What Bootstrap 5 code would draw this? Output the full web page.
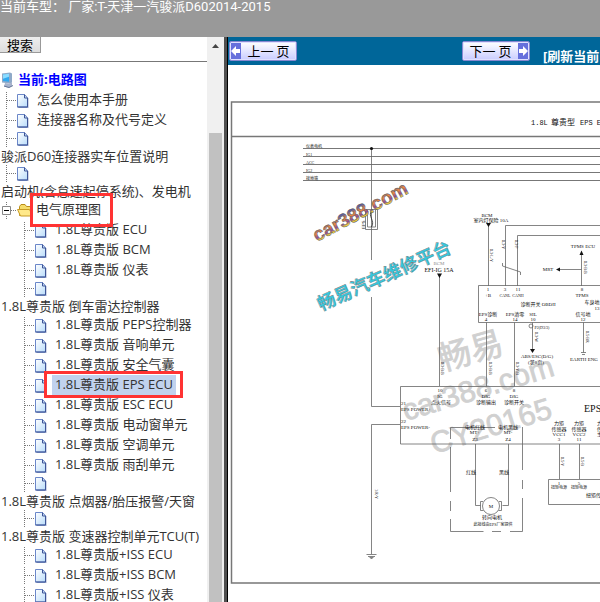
<!DOCTYPE html>
<html lang="zh-CN">
<head>
<meta charset="utf-8">
<meta name="viewport" content="width=device-width, initial-scale=1">
<title>电路图</title>
<link rel="stylesheet" href="https://cdn.jsdelivr.net/npm/bootstrap@5.3.0/dist/css/bootstrap.min.css">
<style>
body{font:13px/20px "Open Sans","Noto Sans CJK SC",sans-serif;color:#333;background:#fff}
a{color:#333;text-decoration:none}
.top-strip{background:#999;color:#fff;height:37px;line-height:14px;font-family:Roboto,"Noto Sans CJK SC",sans-serif}
.side-pane{width:207px}
.search-bar{height:25px;border-bottom:1px solid #777}
.search-btn{width:41px;height:16px;border:1px solid #999;border-top:0;border-left:0;background:linear-gradient(#eee,#ddd);font-size:13px;line-height:12px;color:#000}
.tree-area{padding-top:8px}
.root-link{color:#00f;font-weight:700;font-size:13px;margin-left:3px}
.twig{display:block;flex:none}
.tree-row{height:20px;line-height:19px;white-space:nowrap}
.tree-row a{padding:0 3px;margin-left:5px}
.tree-row .root-link{padding:0;margin-left:3px}
.blank-row{display:block}
.blank-row .caption-line{display:block;height:17px;line-height:17px;padding-left:1px;white-space:nowrap}
.sub-tree .twig{margin-left:18px}
.picked{background:#c1d2ee}
.frame-box{position:absolute;border:3px solid #f33;pointer-events:none}
.frame-folder{left:30px;top:-7px;width:83px;height:34px}
.frame-item{left:44px;top:-4px;width:139px;height:27px}
.scroll-col{width:17px;background:#f0f0f0}
.scroll-arrow{height:96px;padding:6px 0 0 5px}
.scroll-thumb{background:#c1c1c1;margin:0 2px}
.split{width:4px;background:#505050;border-right:1px solid #000}
.tool-strip{background:#069;height:28px;white-space:nowrap;padding-left:1px}
.page-btn{height:20px;width:68px;border:1px solid #8888d0;border-radius:2px;outline:1px solid #dfe0ff;outline-offset:-2px;background:linear-gradient(#fff,#c9ccff);color:#000;font:13px/16px "Noto Sans CJK SC",sans-serif}
.btn-next{margin-left:165px}
.refresh-link{color:#fff;font-weight:700;margin-left:13px;padding-top:9px}
.refresh-link:hover{color:#fff}
.sheet text{font:5px "Liberation Serif","Noto Sans CJK SC",serif;fill:#111}
.sheet .c{text-anchor:middle}
.sheet .fine text{font-size:4px}
.sheet text.wide{font-size:6px}
.sheet .caption text{font:8px "Liberation Mono","Noto Sans CJK SC",monospace;fill:#111}
.sheet .caption .lat{font-size:7px}
.sheet .heading{font-size:10px}
.sheet .grey text{font:30px "Liberation Sans","Noto Sans CJK SC",sans-serif;fill:#d0d0d0;stroke:#d0d0d0;stroke-width:.8}
.sheet .grey .han{font-size:33px}
.sheet .brand{font:700 19px "Liberation Sans",sans-serif;fill:url(#rainbow);stroke:#555;stroke-width:.5}
.sheet .slogan{font:700 18px "Noto Sans CJK SC",sans-serif;fill:#35c8de;stroke:#777;stroke-width:.4}
</style>
<script src="https://cdn.jsdelivr.net/npm/bootstrap@5.3.0/dist/js/bootstrap.bundle.min.js"></script>
</head>
<body class="vh-100 d-flex flex-column overflow-hidden">
<svg width="0" height="0" class="position-absolute" aria-hidden="true">
  <defs>
    <linearGradient id="paper" x1="0" y1="0" x2="1" y2="1"><stop offset="0" stop-color="#fff"/><stop offset="1" stop-color="#b9dcfa"/></linearGradient>
    <linearGradient id="rainbow" x1="0" y1="0" x2="0" y2="1"><stop offset=".2" stop-color="#4a5aa8"/><stop offset=".45" stop-color="#f28a3c"/><stop offset=".65" stop-color="#8a4a9a"/><stop offset=".78" stop-color="#f4dc30"/></linearGradient>
    <g id="leaf">
      <path d="M6.5 2v18M7 10.500h10" stroke="#777" stroke-dasharray="1 1" fill="none"/>
      <path d="M18 4.500h6.500l3 3.500v9.500H18z" fill="#4a5c9c" transform="translate(1 .5)" opacity=".5"/>
      <path d="M17.500 4.500h7l3 3.500v9h-10z" fill="url(#paper)" stroke="#6b87c9"/>
      <path d="M24.500 4.500v3.500h3M27.500 8v9h-10" fill="none" stroke="#3d5496"/>
    </g>
  </defs>
</svg>

<header class="top-strip flex-shrink-0 text-nowrap">当前车型： 厂家:T-天津一汽骏派D602014-2015</header>

<div class="d-flex flex-grow-1 overflow-hidden">
  <aside class="side-pane flex-shrink-0 overflow-hidden">
    <div class="search-bar"><button type="button" class="search-btn d-block p-0">搜索</button></div>
    <nav class="tree-area">
      <div class="tree-row d-flex">
        <svg class="twig" width="15" height="20" viewBox="0 0 15 20"><path d="M2 3.500l8-1 2 1v9l-2 1-8-1z" fill="#8fa9c8"/><path d="M3 4.500l6-.8v8l-6-.7z" fill="#31a9f0"/><path d="M3 4.500l6-.8v3l-6 2z" fill="#8bdcff"/><path d="M5 13l4 .5 3-1v3.500l-3 2-5-1.500z" fill="#a7b3cc"/><path d="M4 16l5 1.500 4-2" fill="none" stroke="#667799"/></svg>
        <a href="#" class="root-link">当前:电路图</a>
      </div>
      <ul class="list-unstyled m-0">
        <li class="tree-row d-flex"><svg class="twig" width="29" height="20"><use href="#leaf"/></svg><a href="#">怎么使用本手册</a></li>
        <li class="tree-row d-flex"><svg class="twig" width="29" height="20"><use href="#leaf"/></svg><a href="#">连接器名称及代号定义</a></li>
        <li><a href="#" class="blank-row"><svg class="twig" width="29" height="18" viewBox="0 2 29 18"><use href="#leaf"/></svg><span class="caption-line">骏派D60连接器实车位置说明</span></a></li>
        <li><a href="#" class="blank-row"><svg class="twig" width="29" height="18" viewBox="0 2 29 18"><use href="#leaf"/></svg><span class="caption-line">启动机(含怠速起停系统)、发电机</span></a></li>
        <li>
          <div class="tree-row d-flex position-relative">
            <svg class="twig" width="33" height="20" viewBox="0 0 33 20"><path d="M6.500 2v18M11 10.500h6" stroke="#777" stroke-dasharray="1 1"/><path d="M2.500 6.500h8v8h-8z" fill="#fff" stroke="#888"/><path d="M4 10.500h5" stroke="#000"/><path d="M19.500 15.500v-9l1.500-2h4l1.500 2h5v9z" fill="#f5dc6a" stroke="#b98d1a"/><path d="M17.500 9.500h12l3 6.500h-12z" fill="#ffe98a" stroke="#c89b24"/></svg>
            <a href="#" class="ms-0">电气原理图</a>
            <span class="frame-box frame-folder z-1"></span>
          </div>
          <ul class="list-unstyled m-0 sub-tree">
            <li class="tree-row d-flex"><svg class="twig" width="29" height="20"><use href="#leaf"/></svg><a href="#">1.8L尊贵版 ECU</a></li>
            <li class="tree-row d-flex"><svg class="twig" width="29" height="20"><use href="#leaf"/></svg><a href="#">1.8L尊贵版 BCM</a></li>
            <li class="tree-row d-flex"><svg class="twig" width="29" height="20"><use href="#leaf"/></svg><a href="#">1.8L尊贵版 仪表</a></li>
            <li><a href="#" class="blank-row"><svg class="twig" width="29" height="18" viewBox="0 2 29 18"><use href="#leaf"/></svg><span class="caption-line">1.8L尊贵版 倒车雷达控制器</span></a></li>
            <li class="tree-row d-flex"><svg class="twig" width="29" height="20"><use href="#leaf"/></svg><a href="#">1.8L尊贵版 PEPS控制器</a></li>
            <li class="tree-row d-flex"><svg class="twig" width="29" height="20"><use href="#leaf"/></svg><a href="#">1.8L尊贵版 音响单元</a></li>
            <li class="tree-row d-flex"><svg class="twig" width="29" height="20"><use href="#leaf"/></svg><a href="#">1.8L尊贵版 安全气囊</a></li>
            <li class="tree-row d-flex position-relative"><svg class="twig" width="29" height="20"><use href="#leaf"/></svg><a href="#" class="picked">1.8L尊贵版 EPS ECU</a><span class="frame-box frame-item z-1"></span></li>
            <li class="tree-row d-flex"><svg class="twig" width="29" height="20"><use href="#leaf"/></svg><a href="#">1.8L尊贵版 ESC ECU</a></li>
            <li class="tree-row d-flex"><svg class="twig" width="29" height="20"><use href="#leaf"/></svg><a href="#">1.8L尊贵版 电动窗单元</a></li>
            <li class="tree-row d-flex"><svg class="twig" width="29" height="20"><use href="#leaf"/></svg><a href="#">1.8L尊贵版 空调单元</a></li>
            <li class="tree-row d-flex"><svg class="twig" width="29" height="20"><use href="#leaf"/></svg><a href="#">1.8L尊贵版 雨刮单元</a></li>
            <li><a href="#" class="blank-row"><svg class="twig" width="29" height="18" viewBox="0 2 29 18"><use href="#leaf"/></svg><span class="caption-line">1.8L尊贵版 点烟器/胎压报警/天窗</span></a></li>
            <li><a href="#" class="blank-row"><svg class="twig" width="29" height="18" viewBox="0 2 29 18"><use href="#leaf"/></svg><span class="caption-line">1.8L尊贵版 变速器控制单元TCU(T)</span></a></li>
            <li class="tree-row d-flex"><svg class="twig" width="29" height="20"><use href="#leaf"/></svg><a href="#">1.8L尊贵版+ISS ECU</a></li>
            <li class="tree-row d-flex"><svg class="twig" width="29" height="20"><use href="#leaf"/></svg><a href="#">1.8L尊贵版+ISS BCM</a></li>
            <li class="tree-row d-flex"><svg class="twig" width="29" height="20"><use href="#leaf"/></svg><a href="#">1.8L尊贵版+ISS 仪表</a></li>
          </ul>
        </li>
      </ul>
    </nav>
  </aside>

  <div class="scroll-col d-flex flex-column flex-shrink-0">
    <div class="scroll-arrow"><svg class="d-block" width="8" height="6"><path d="M0 5l3.500-4 3.500 4z" fill="#444"/></svg></div>
    <div class="scroll-thumb flex-grow-1"></div>
  </div>
  <div class="split flex-shrink-0"></div>

  <main class="flex-grow-1 overflow-hidden">
    <div class="tool-strip d-flex align-items-center">
      <button type="button" class="page-btn d-flex align-items-center p-0 flex-shrink-0"><svg class="flex-shrink-0" width="11" height="18"><path d="M0 0h11v18H0z" fill="#6670dc"/><path d="M1 9l5-5v3h4v4H6v3z" fill="#fff"/></svg><span class="flex-grow-1">上一 页</span></button>
      <button type="button" class="page-btn btn-next d-flex align-items-center p-0 flex-shrink-0"><span class="flex-grow-1">下一 页</span><svg class="flex-shrink-0" width="11" height="18"><path d="M0 0h11v18H0z" fill="#6670dc"/><path d="M10 9L5 4v3H1v4h4v3z" fill="#fff"/></svg></button>
      <a href="#" class="refresh-link">[刷新当前</a>
    </div>
    <svg class="sheet d-block" width="720" height="537" viewBox="228 65 720 537" role="img" aria-label="EPS ECU 电路图">
      <g class="grey">
        <text class="han" transform="translate(442 371) rotate(-16)">畅易</text>
        <text transform="translate(406 421) rotate(-17)">car388.com</text>
        <text transform="translate(434 454) rotate(-17)">CY20165</text>
      </g>
      <!-- sheet border and supply rails -->
      <path d="M948 102H231.500V583H948M231 136.500H948" fill="none" stroke="#777" stroke-width="1.500"/>
      <path d="M303 148.500H948M303 156.500H948M303 164.500H948M303 172.500H948M303 180.500H948" stroke="#777"/>
      <g class="fine"><text x="306" y="148">仪表电机</text><text x="306" y="156">IG1</text><text x="306" y="164">ACC</text><text x="306" y="172">IG2</text><text x="306" y="180">接地端</text></g>
      <g class="caption"><text x="531" y="125" class="lat">1.8L</text><text x="551" y="125">尊贵型</text><text x="580" y="125" class="lat">EPS E</text></g>
      <!-- wires -->
      <g fill="none" stroke="#666" stroke-width=".8">
        <path d="M371.500 148V260M371.500 297V406.500H400M400 424.500H371.500V554M365.500 209.500h12v20h-12zM367.500 210v17h8v-17"/>
        <path d="M371.500 211c-4 5 4 10 0 16" stroke="#222"/>
        <path d="M439.500 274V386M488.500 226V286M505.500 286V225.500H948M517.500 286V235.500H948M502.500 263v3l18 6v3M581.500 254V286M560 269.500h21.500"/>
        <path d="M478.500 285.500H948M478.500 285.500v37H948M486.500 322.500v64M514.500 322.500v64M532.500 322.500v28M583.500 322.500v30"/>
        <path d="M948 386.500H400.500v57.500H948M475.500 444v61.500h5M508.500 444v61.500h-6M559.500 444v35M579.500 444v35M948 479.500H548.500v25H948"/>
        <path d="M495 427.500h-44.500V439M450.500 447v45M450.500 501v10M450.500 519v12.500h33M492 531.500h9M510 531.500h12.500V498M522.500 489v-9M522.500 470v-43"/>
        <circle cx="491" cy="506" r="8.500"/><path d="M483 501.500h-2.500v9h3M499 501.500h2.500v9h-3M529 326a2 2 0 1 0 4 0 2 2 0 1 0-4 0"/>
        <path d="M366.500 554.500h10M368 556.500h7M369.500 557.500h4M370.500 558.500h2M581 352.500h5M582 354.500h3"/>
      </g>
      <path d="M486 223h5l-2.500 4zM437 273.500h5l-2.500 4.500zM530 349h5l-2.500 4zM579.500 255h4l-2-4.500zM560 267.500v4l-4-2z" fill="#111"/>
      <circle cx="371.500" cy="148.500" r="1.600" fill="#111"/>
      <text transform="translate(365 229) rotate(-90)">EPS</text>
      <g class="c">
        <text x="487" y="217">BCM</text><text x="491" y="222">室内灯保险 10A</text>
        <text x="583" y="248">TPMS ECU</text><text x="548" y="271">MRT</text>
        <text x="439" y="265" opacity=".5">BCM</text><text x="439" y="272" class="wide">EFI-IG 15A</text>
        <text x="488" y="291">1</text><text x="488" y="297">+B</text><text x="505" y="291">3</text><text x="518" y="291">11</text><text x="582" y="291">8</text><text x="582" y="297">TPMS</text>
        <text x="538" y="306">诊断开关 OBDII</text><text x="592" y="304">车身地</text><text x="597" y="310">13</text>
        <text x="488" y="316">EPS诊断</text><text x="486" y="321">4</text><text x="515" y="316">EPS清零</text><text x="515" y="321">14</text><text x="533" y="316">SIL</text><text x="533" y="321">10</text><text x="583" y="316">信号地</text><text x="583" y="321">12</text>
        <text x="537" y="358">ABS/ESC(D/G)</text><text x="536" y="364">(第8页)</text><text x="584" y="361">EARTH ENG</text>
        <text x="440" y="392">10</text><text x="440" y="398">IG</text><text x="441" y="404">点火信号</text><text x="486" y="392">6</text><text x="486" y="398">DIG</text><text x="486" y="404">诊断输出</text><text x="514" y="392">8</text><text x="514" y="398">DIG</text><text x="514" y="404">诊断开关</text>
        <text x="475" y="429">电机红线</text><text x="475" y="434">MT+</text><text x="475" y="441">Z3</text><text x="508" y="429">电机黑线</text><text x="508" y="434">MT-</text><text x="508" y="441">Z4</text>
        <text x="471" y="474">红线</text><text x="504" y="474">黑线</text>
        <text x="559" y="425">力矩</text><text x="559" y="431">传感器</text><text x="559" y="436">VCC1</text><text x="559" y="441">3</text>
        <text x="579" y="425">力矩</text><text x="579" y="431">传感器</text><text x="579" y="436">VCC2</text><text x="579" y="441">11</text>
        <text x="491" y="508">M</text><text x="492" y="519">转向电机</text><text x="559" y="485">1</text><text x="579" y="485">5</text>
      </g>
      <g class="c fine"><text x="505" y="297">CANL</text><text x="518" y="297">CANH</text><text x="493" y="526">此接线由EPS厂家提供</text><text x="542" y="329">P2(D3/3)</text><text x="559" y="489">扭矩电源</text><text x="579" y="489">扭矩电源</text></g>
      <text x="586" y="497">扭矩传感器</text>
      <text x="597" y="425">力矩</text><text x="597" y="431">传感器</text><text x="597" y="436">主信号</text>
      <text x="401" y="405">21</text><text x="401" y="411">EPS POWER+</text><text x="401" y="423">22</text><text x="401" y="429">EPS POWER-</text>
      <text x="584" y="412" class="heading">EPS</text>
      <g class="fine">
        <text transform="translate(490 249) rotate(90)">0.3-L/Y</text><text transform="translate(502 240) rotate(90)">0.3-Y</text><text transform="translate(515 240) rotate(90)">0.3-P</text>
        <text transform="translate(584 261) rotate(90)">0.3-B/B</text><text transform="translate(441 362) rotate(90)">0.3-B/B</text><text transform="translate(489 362) rotate(90)">0.3-B/B</text><text transform="translate(516 362) rotate(90)">0.3-Y/B</text>
        <text transform="translate(535 332) rotate(90)">0.3-W</text><text transform="translate(586 331) rotate(90)">0.5-BR</text>
        <text transform="translate(561 457) rotate(90)">0.5-Y</text><text transform="translate(581 457) rotate(90)">0.5-B</text><text transform="translate(375 489) rotate(90)">1/R-Y</text>
      </g>
      <text class="brand" transform="translate(317 242) rotate(-28)">car388.com</text>
      <text class="slogan" transform="translate(321 311) rotate(-24)">畅易汽车维修平台</text>
    </svg>
  </main>
</div>
</body>
</html>
